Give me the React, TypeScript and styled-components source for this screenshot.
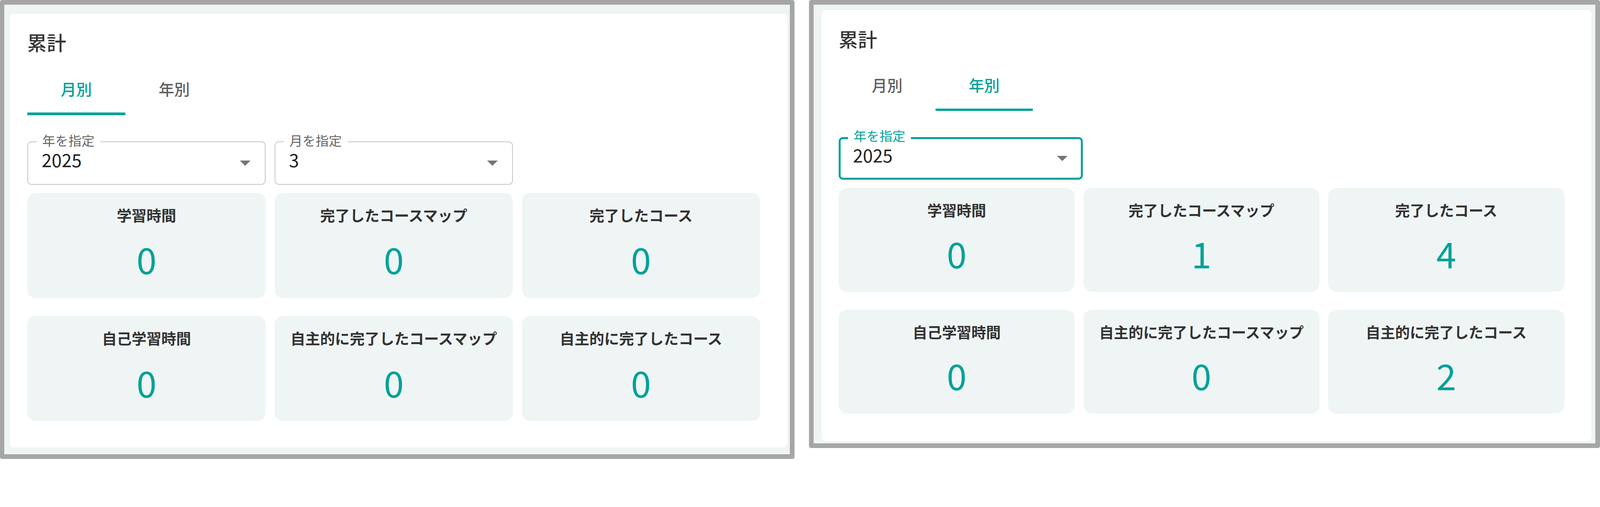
import React from 'react'
import styled, { createGlobalStyle, ThemeProvider } from 'styled-components'

const teal = '#00a199'
const mist = '#eff5f5'

// the photo is 4523px wide for a 4096px wide viewport
const S = 4096 / 4523

interface Scale {
  k: number
}

// page-level lengths (measured on the photo)
const u = (n: number) => `${n * S}px`

// panel-level lengths, scaled by theme.k
const px = (n: number) => ({ theme }: { theme: Scale }) => `${n * theme.k}px`

const GlobalStyle = createGlobalStyle`
  html, body {
    margin: 0;
    padding: 0;
    background: #fff;
  }
  body {
    font-family: "Noto Sans CJK JP", "Noto Sans", sans-serif;
  }
`

const Page = styled.div`
  display: flex;
  align-items: flex-start;
  gap: ${u(41)};
  width: ${u(4523)};
  height: ${u(1298)};
  overflow: hidden;
`

const Frame = styled.div<{ $w: number; $h: number; $border: number[]; $pad: number[] }>`
  box-sizing: border-box;
  display: flex;
  flex: none;
  width: ${p => u(p.$w)};
  height: ${p => u(p.$h)};
  border-style: solid;
  border-color: #a6a6a6;
  border-width: ${p => p.$border.map(u).join(' ')};
  border-radius: ${u(6)};
  padding: ${p => p.$pad.map(u).join(' ')};
  background: ${mist};
`

const Card = styled.section`
  flex: 1;
  min-width: 0;
  display: flex;
  flex-direction: column;
  align-items: flex-start;
  box-sizing: border-box;
  padding-top: ${px(53)};
  padding-left: ${px(49)};
  background: #fff;
  border-radius: ${px(12)};
`

const Title = styled.h2`
  margin: 0;
  font-size: ${px(55)};
  line-height: 1;
  font-weight: 500;
  color: #333;
`

const TabList = styled.div`
  display: flex;
  margin-top: ${px(33)};
`

const Tab = styled.button<{ $active?: boolean }>`
  position: relative;
  display: flex;
  align-items: center;
  justify-content: center;
  width: ${px(277)};
  height: ${px(146)};
  padding: 0 0 ${px(4)};
  border: 0;
  background: none;
  font-family: inherit;
  font-size: ${px(44)};
  line-height: 1;
  font-weight: 500;
  color: ${p => (p.$active ? teal : '#5f5f5f')};

  &::after {
    content: '';
    display: ${p => (p.$active ? 'block' : 'none')};
    position: absolute;
    left: 0;
    right: 0;
    bottom: 0;
    height: ${px(7)};
    background: ${teal};
  }
`

const SelectRow = styled.div`
  display: flex;
  gap: ${px(25)};
  margin-top: ${px(75)};
`

const SelectBox = styled.div<{ $focused?: boolean; $w: number }>`
  --b: ${p => (p.$focused ? 6 : 3)};
  position: relative;
  display: flex;
  align-items: flex-start;
  box-sizing: border-box;
  width: ${p => px(p.$w)(p)};
  height: ${px(122)};
  border: calc(var(--b) * ${p => p.theme.k}px) solid
    ${p => (p.$focused ? teal : '#c6c6c6')};
  border-radius: ${px(12)};
  padding-top: calc((26 - var(--b)) * ${p => p.theme.k}px);
  padding-left: calc((41.5 - var(--b)) * ${p => p.theme.k}px);
  padding-right: calc((44 - var(--b)) * ${p => p.theme.k}px);
`

const FieldLabel = styled.span<{ $focused?: boolean }>`
  position: absolute;
  top: calc((-21.6 - var(--b)) * ${p => p.theme.k}px);
  left: calc((27 - var(--b)) * ${p => p.theme.k}px);
  padding: 0 ${px(16)};
  background: #fff;
  font-size: ${px(37)};
  line-height: 1;
  color: ${p => (p.$focused ? teal : '#666')};
`

const FieldValue = styled.span`
  font-size: ${px(51)};
  line-height: 1;
  color: #212121;
`

const Caret = styled.svg`
  flex: none;
  margin-left: auto;
  margin-top: ${px(28)};
  width: ${px(30)};
  height: ${px(15)};
  fill: #757575;
`

const StatGrid = styled.div`
  display: grid;
  grid-template-columns: repeat(3, ${px(674)});
  column-gap: ${px(25)};
  row-gap: ${px(51)};
  margin-top: ${px(23)};
`

const StatCard = styled.div`
  display: flex;
  flex-direction: column;
  align-items: center;
  box-sizing: border-box;
  height: ${px(297)};
  padding-top: ${px(41)};
  background: ${mist};
  border-radius: ${px(24)};
`

const StatLabel = styled.div`
  font-size: ${px(42)};
  line-height: 1;
  font-weight: 700;
  color: #333;
  white-space: nowrap;
`

const StatValue = styled.div`
  margin-top: ${px(52.5)};
  font-size: ${px(102)};
  line-height: 1;
  font-weight: 400;
  color: ${teal};
`

interface Field {
  label: string
  value: string
  focused?: boolean
  width: number
}

interface SummaryProps {
  tab: 'month' | 'year'
  fields: Field[]
  stats: number[]
}

const statLabels = [
  '学習時間',
  '完了したコースマップ',
  '完了したコース',
  '自己学習時間',
  '自主的に完了したコースマップ',
  '自主的に完了したコース',
]

const Summary = ({ tab, fields, stats }: SummaryProps) => (
  <Card>
    <Title>累計</Title>
    <TabList>
      <Tab $active={tab === 'month'}>月別</Tab>
      <Tab $active={tab === 'year'}>年別</Tab>
    </TabList>
    <SelectRow>
      {fields.map(f => (
        <SelectBox key={f.label} $focused={f.focused} $w={f.width}>
          <FieldLabel $focused={f.focused}>{f.label}</FieldLabel>
          <FieldValue>{f.value}</FieldValue>
          <Caret viewBox="0 0 10 5">
            <path d="M0 0l5 5 5-5z" />
          </Caret>
        </SelectBox>
      ))}
    </SelectRow>
    <StatGrid>
      {statLabels.map((label, i) => (
        <StatCard key={label}>
          <StatLabel>{label}</StatLabel>
          <StatValue>{stats[i]}</StatValue>
        </StatCard>
      ))}
    </StatGrid>
  </Card>
)

export default function App() {
  return (
    <>
      <GlobalStyle />
      <Page>
        <Frame $w={2246} $h={1297} $border={[14, 14, 14, 13]} $pad={[25, 8, 18, 16]}>
          <ThemeProvider theme={{ k: S }}>
            <Summary
              tab="month"
              fields={[
                { label: '年を指定', value: '2025', width: 674 },
                { label: '月を指定', value: '3', width: 674 },
              ]}
              stats={[0, 0, 0, 0, 0, 0]}
            />
          </ThemeProvider>
        </Frame>
        <Frame $w={2236} $h={1267} $border={[14, 14, 14, 14]} $pad={[16, 11, 7, 22]}>
          <ThemeProvider theme={{ k: S * 0.99 }}>
            <Summary
              tab="year"
              fields={[{ label: '年を指定', value: '2025', focused: true, width: 697 }]}
              stats={[0, 1, 4, 0, 0, 2]}
            />
          </ThemeProvider>
        </Frame>
      </Page>
    </>
  )
}
